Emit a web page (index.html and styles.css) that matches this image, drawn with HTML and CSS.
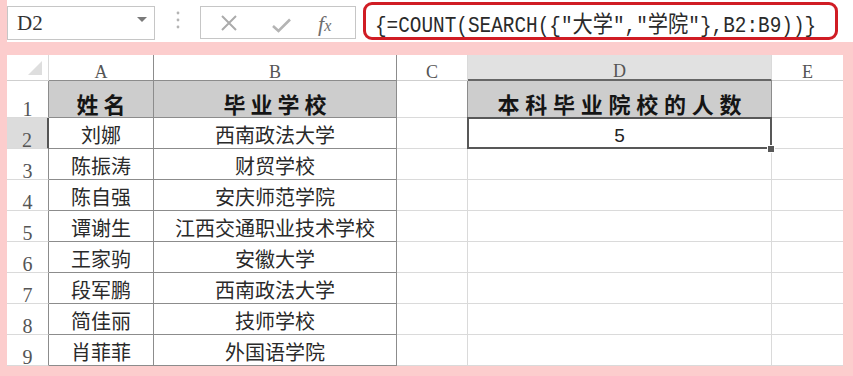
FILE: index.html
```html
<!DOCTYPE html>
<html lang="zh-CN">
<head>
<meta charset="utf-8">
<title>COUNT SEARCH</title>
<link rel="stylesheet" href="styles.css">
</head>
<body>
<div class="app">
  <div class="fbar">
    <div class="namebox">
      <span>D2</span>
      <svg class="dd" width="10" height="6" viewBox="0 0 10 6"><polygon points="0,0 10,0 5,5" fill="#7a7a7a"/></svg>
    </div>
    <div class="sep">
      <svg width="4" height="22" viewBox="0 0 4 22"><circle cx="2" cy="3" r="1.4" fill="#b4b4b4"/><circle cx="2" cy="10" r="1.4" fill="#b4b4b4"/><circle cx="2" cy="17" r="1.4" fill="#b4b4b4"/></svg>
    </div>
    <div class="btnbox">
      <svg class="ico-x" width="16" height="16" viewBox="0 0 16 16"><path d="M1 1 L15 15 M15 1 L1 15" stroke="#ababab" stroke-width="2" fill="none"/></svg>
      <svg class="ico-ok" width="19" height="15" viewBox="0 0 19 15"><path d="M1 8 L6.5 13 L18 1.5" stroke="#b4b4b4" stroke-width="2.6" fill="none"/></svg>
      <span class="fx"><i>f</i><i class="fx-x">x</i></span>
    </div>
    <div class="formula">
      <span class="ftext">{=COUNT(SEARCH({″<span class="cjk">大学</span>″,″<span class="cjk">学院</span>″},B2:B9))}</span>
    </div>
  </div>

  <div class="sheet">
    <div class="c corner"><svg width="16" height="16" viewBox="0 0 16 16"><polygon points="15,1 15,15 1,15" fill="#dedede"/></svg></div>
    <div class="c ch t">A</div>
    <div class="c ch t">B</div>
    <div class="c ch cc">C</div>
    <div class="c ch sel">D</div>
    <div class="c ch ce">E</div>

    <div class="c rh">1</div>
    <div class="c t hd">姓名</div>
    <div class="c t hd">毕业学校</div>
    <div class="c cc c1"></div>
    <div class="c t hd dh">本科毕业院校的人数</div>
    <div class="c ce"></div>

    <div class="c rh rsel">2</div>
    <div class="c t">刘娜</div>
    <div class="c t">西南政法大学</div>
    <div class="c cc"></div>
    <div class="c num active">5</div>
    <div class="c ce"></div>

    <div class="c rh">3</div>
    <div class="c t">陈振涛</div>
    <div class="c t">财贸学校</div>
    <div class="c cc"></div>
    <div class="c"></div>
    <div class="c ce"></div>

    <div class="c rh">4</div>
    <div class="c t">陈自强</div>
    <div class="c t">安庆师范学院</div>
    <div class="c cc"></div>
    <div class="c"></div>
    <div class="c ce"></div>

    <div class="c rh">5</div>
    <div class="c t">谭谢生</div>
    <div class="c t">江西交通职业技术学校</div>
    <div class="c cc"></div>
    <div class="c"></div>
    <div class="c ce"></div>

    <div class="c rh">6</div>
    <div class="c t">王家驹</div>
    <div class="c t">安徽大学</div>
    <div class="c cc"></div>
    <div class="c"></div>
    <div class="c ce"></div>

    <div class="c rh">7</div>
    <div class="c t">段军鹏</div>
    <div class="c t">西南政法大学</div>
    <div class="c cc"></div>
    <div class="c"></div>
    <div class="c ce"></div>

    <div class="c rh">8</div>
    <div class="c t">简佳丽</div>
    <div class="c t">技师学校</div>
    <div class="c cc"></div>
    <div class="c"></div>
    <div class="c ce"></div>

    <div class="c rh">9</div>
    <div class="c t">肖菲菲</div>
    <div class="c t">外国语学院</div>
    <div class="c cc"></div>
    <div class="c"></div>
    <div class="c ce"></div>
  </div>
</div>
</body>
</html>
```
FILE: styles.css
```css
html, body {
  margin: 0;
  padding: 0;
}
body {
  background: #fccdcd;
  width: 853px;
  height: 376px;
  overflow: hidden;
  font-family: "Noto Sans CJK SC", sans-serif;
}
.app {
  margin-left: 7px;
}

/* formula bar */
.fbar {
  display: flex;
  align-items: flex-start;
  width: 846px;
  height: 42px;
  background: #fff;
}
.namebox {
  box-sizing: border-box;
  width: 148px;
  height: 34px;
  margin-top: 6px;
  border: 1px solid #c6c6c6;
  display: flex;
  align-items: center;
  justify-content: space-between;
  padding: 0 7px 0 9px;
  font-family: "Liberation Serif", serif;
  font-size: 21px;
  color: #333;
}
.dd {
  margin-top: -6px;
}
.sep {
  width: 45px;
  display: flex;
  justify-content: center;
  padding-top: 10px;
}
.btnbox {
  box-sizing: border-box;
  width: 156px;
  height: 33px;
  margin-top: 6px;
  border: 1px solid #c6c6c6;
  display: flex;
  align-items: center;
  padding-left: 20px;
}
.ico-x {
  margin-top: 1px;
}
.ico-ok {
  margin-left: 35px;
  margin-top: 6px;
}
.fx {
  margin-left: 27px;
  font-family: "Liberation Serif", serif;
  font-size: 22px;
  color: #6e6e6e;
  line-height: 1;
  margin-top: 2px;
}
.fx-x {
  font-size: 16px;
}
.formula {
  box-sizing: border-box;
  width: 475px;
  height: 38px;
  margin-top: 2px;
  margin-left: 7px;
  border: 3px solid #d01c24;
  border-radius: 9px;
  padding-left: 9px;
  display: flex;
  align-items: center;
  overflow: hidden;
}
.ftext {
  display: inline-block;
  font-family: "Liberation Mono", "DejaVu Sans Mono", "Noto Sans CJK SC", monospace;
  font-size: 22px;
  color: #2a2a2a;
  white-space: nowrap;
  transform: scaleX(0.88);
  transform-origin: left center;
  margin-top: 2px;
}
.cjk {
  font-family: "Noto Sans CJK SC", sans-serif;
  font-size: 23px;
}

/* sheet grid */
.sheet {
  display: grid;
  grid-template-columns: 42px 105px 243px 71px 304px 71px;
  grid-template-rows: 26px 37px repeat(8, 31px);
  width: 836px;
  margin-top: 13px;
  background: #fff;
}
.c {
  box-sizing: border-box;
  display: flex;
  align-items: flex-end;
  justify-content: center;
  padding-bottom: 3px;
  border-right: 1px solid #dadada;
  border-bottom: 1px solid #dadada;
  font-size: 20px;
  line-height: 1;
  color: #2a2a2a;
  white-space: nowrap;
}
.corner {
  justify-content: flex-end;
  padding: 0 5px 4px 0;
  border-bottom-color: #cfcfcf;
}
.ch {
  font-family: "Liberation Serif", serif;
  font-size: 18px;
  line-height: 15px;
  color: #555;
  padding-bottom: 0;
  border-bottom-color: #cfcfcf;
}
.ch.t {
  border-bottom-color: #8c8c8c;
}
.ch.sel {
  background: #e1e1e1;
  border-bottom: 2px solid #666;
}
.rh {
  font-family: "Liberation Serif", serif;
  font-size: 20px;
  line-height: 15px;
  color: #555;
  padding-bottom: 0;
  border-right-color: #8c8c8c;
}
.rh.rsel {
  background: #dcdcdc;
  border-right: 2px solid #555;
}
.t {
  border-right-color: #8c8c8c;
  border-bottom-color: #8c8c8c;
}
.hd {
  background: #cdcdcd;
  font-weight: 700;
  font-size: 22px;
  letter-spacing: 5px;
  padding-left: 5px;
  color: #151515;
}
.dh {
  letter-spacing: 5.75px;
  padding-left: 5.75px;
}
.cc.c1 {
  border-right-color: #8c8c8c;
}
.ce {
  border-right: none;
}
.num {
  font-family: "Liberation Sans", Arial, sans-serif;
  font-size: 19px;
  color: #222;
}
.active {
  position: relative;
  z-index: 1;
}
.active::after {
  content: "";
  position: absolute;
  top: -1px;
  left: -1px;
  right: -1px;
  bottom: -1px;
  border: 2px solid #585858;
}
.active::before {
  content: "";
  position: absolute;
  right: -3px;
  bottom: -4px;
  width: 6px;
  height: 6px;
  background: #585858;
  outline: 1px solid #fff;
  z-index: 2;
}
```
